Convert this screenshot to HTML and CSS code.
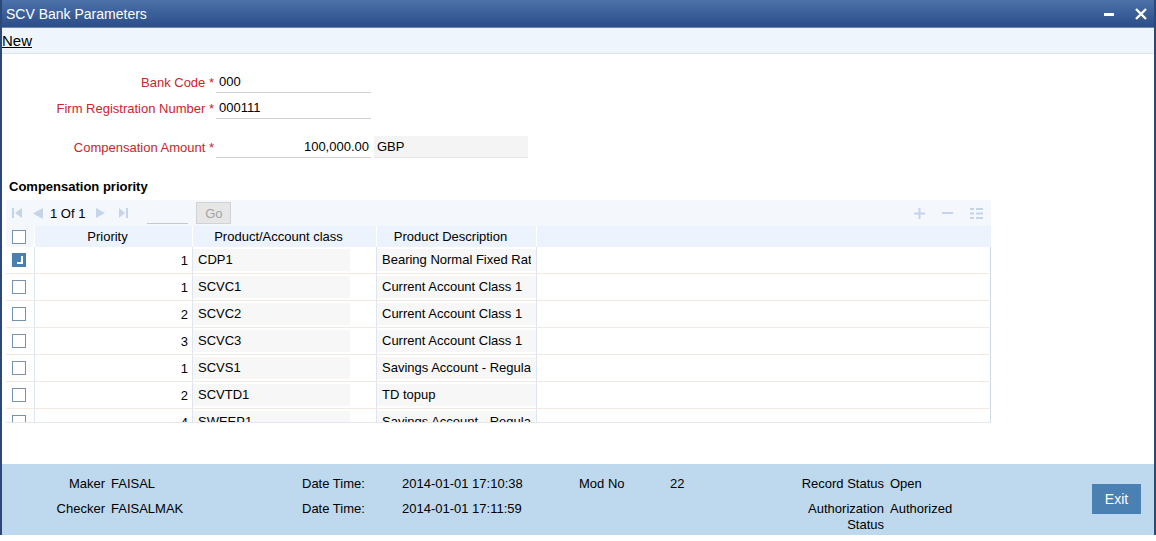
FILE: index.html
```html
<!DOCTYPE html>
<html lang="en">
<head>
    <meta charset="UTF-8">
    <title>SCV Bank Parameters</title>
    <link rel="stylesheet" href="styles.css">
</head>
<body>
    <div class="window">
        <div class="titlebar">
            <span class="title">SCV Bank Parameters</span>
            <svg class="btn-min" width="10" height="3" viewBox="0 0 10 3"><rect width="10" height="3" fill="#fff"/></svg>
            <svg class="btn-close" width="12" height="12" viewBox="0 0 12 12"><path d="M1 1L11 11M11 1L1 11" stroke="#fff" stroke-width="2.4"/></svg>
        </div>

        <div class="toolbar">
            <a href="#" class="new">New</a>
        </div>

        <div class="form">
            <div class="field">
                <label class="lbl">Bank Code <span class="req">*</span></label>
                <div class="inp">000</div>
            </div>
            <div class="field">
                <label class="lbl">Firm Registration Number <span class="req">*</span></label>
                <div class="inp">000111</div>
            </div>
            <div class="field field-gap">
                <label class="lbl">Compensation Amount <span class="req">*</span></label>
                <div class="inp num">100,000.00</div>
                <div class="ccy">GBP</div>
            </div>
        </div>

        <h3 class="section">Compensation priority</h3>

        <div class="grid">
            <div class="gtool">
                <svg class="nav nav-first" width="10" height="10" viewBox="0 0 10 10"><rect width="2" height="10"/><path d="M10 0L3 5L10 10Z"/></svg>
                <svg class="nav nav-prev" width="10" height="11" viewBox="0 0 10 11"><path d="M10 0L0 5.5L10 11Z"/></svg>
                <span class="pages">1 Of 1</span>
                <svg class="nav nav-next" width="9" height="10" viewBox="0 0 9 10"><path d="M0 0L9 5L0 10Z"/></svg>
                <svg class="nav nav-last" width="9" height="10" viewBox="0 0 9 10"><path d="M0 0L6 5L0 10Z"/><rect x="7" width="2" height="10"/></svg>
                <span class="pageinp"></span>
                <button class="go">Go</button>
                <svg class="tool tool-add" width="11" height="11" viewBox="0 0 11 11"><rect x="4.5" width="2" height="11"/><rect y="4.5" width="11" height="2"/></svg>
                <svg class="tool tool-del" width="11" height="2" viewBox="0 0 11 2"><rect width="11" height="2"/></svg>
                <svg class="tool tool-list" width="13" height="11" viewBox="0 0 13 11"><rect width="4" height="2"/><rect x="6" width="7" height="2"/><rect y="4.5" width="4" height="2"/><rect x="6" y="4.5" width="7" height="2"/><rect y="9" width="4" height="2"/><rect x="6" y="9" width="7" height="2"/></svg>
            </div>

            <div class="ghead">
                <div class="c-chk"><span class="chk"></span></div>
                <div class="c-pri">Priority</div>
                <div class="c-prod">Product/Account class</div>
                <div class="c-desc">Product Description</div>
                <div class="c-rest"></div>
            </div>

            <div class="gbody">
                <div class="grow">
                    <div class="c-chk"><svg class="chk-on" width="14" height="14" viewBox="0 0 14 14"><rect width="14" height="14" fill="#4b7fb0"/><path d="M9 3h2v8H5V9h4z" fill="#fff"/></svg></div>
                    <div class="c-pri">1</div>
                    <div class="c-prod"><span class="box">CDP1</span></div>
                    <div class="c-desc"><span class="box"><span class="txt">Bearing Normal Fixed Rate</span></span></div>
                    <div class="c-rest"></div>
                </div>
                <div class="grow">
                    <div class="c-chk"><span class="chk"></span></div>
                    <div class="c-pri">1</div>
                    <div class="c-prod"><span class="box">SCVC1</span></div>
                    <div class="c-desc"><span class="box"><span class="txt">Current Account Class 1</span></span></div>
                    <div class="c-rest"></div>
                </div>
                <div class="grow">
                    <div class="c-chk"><span class="chk"></span></div>
                    <div class="c-pri">2</div>
                    <div class="c-prod"><span class="box">SCVC2</span></div>
                    <div class="c-desc"><span class="box"><span class="txt">Current Account Class 1</span></span></div>
                    <div class="c-rest"></div>
                </div>
                <div class="grow">
                    <div class="c-chk"><span class="chk"></span></div>
                    <div class="c-pri">3</div>
                    <div class="c-prod"><span class="box">SCVC3</span></div>
                    <div class="c-desc"><span class="box"><span class="txt">Current Account Class 1</span></span></div>
                    <div class="c-rest"></div>
                </div>
                <div class="grow">
                    <div class="c-chk"><span class="chk"></span></div>
                    <div class="c-pri">1</div>
                    <div class="c-prod"><span class="box">SCVS1</span></div>
                    <div class="c-desc"><span class="box"><span class="txt">Savings Account - Regular</span></span></div>
                    <div class="c-rest"></div>
                </div>
                <div class="grow">
                    <div class="c-chk"><span class="chk"></span></div>
                    <div class="c-pri">2</div>
                    <div class="c-prod"><span class="box">SCVTD1</span></div>
                    <div class="c-desc"><span class="box"><span class="txt">TD topup</span></span></div>
                    <div class="c-rest"></div>
                </div>
                <div class="grow">
                    <div class="c-chk"><span class="chk"></span></div>
                    <div class="c-pri">4</div>
                    <div class="c-prod"><span class="box">SWEEP1</span></div>
                    <div class="c-desc"><span class="box"><span class="txt">Savings Account - Regular</span></span></div>
                    <div class="c-rest"></div>
                </div>
            </div>
        </div>

        <div class="footer">
            <div class="fcol fcol-1">
                <div class="frow"><span class="flbl">Maker</span><span class="fval">FAISAL</span></div>
                <div class="frow"><span class="flbl">Checker</span><span class="fval">FAISALMAK</span></div>
            </div>
            <div class="fcol fcol-2">
                <div class="frow"><span class="flbl">Date Time:</span><span>2014-01-01 17:10:38</span></div>
                <div class="frow"><span class="flbl">Date Time:</span><span>2014-01-01 17:11:59</span></div>
            </div>
            <div class="fcol fcol-3">
                <div class="frow"><span class="flbl">Mod No</span><span>22</span></div>
            </div>
            <div class="fcol fcol-4">
                <div class="frow"><span class="flbl">Record Status</span><span class="fval">Open</span></div>
                <div class="frow"><span class="flbl">Authorization Status</span><span class="fval">Authorized</span></div>
            </div>
            <button class="exit">Exit</button>
        </div>
    </div>
</body>
</html>
```

FILE: styles.css
```css
body {
    margin: 0;
    font-family: "Liberation Sans", Arial, sans-serif;
    font-size: 13px;
    color: #000;
    background: #fff;
}

.window {
    height: 535px;
    border-left: 2px solid #2c4877;
    border-right: 2px solid #2c4877;
    display: flex;
    flex-direction: column;
}

/* title bar */
.titlebar {
    height: 27px;
    border-bottom: 1px solid #6f88b0;
    background: linear-gradient(#4c72aa, #2b4d88);
    display: flex;
    align-items: center;
    color: #fff;
    font-size: 14px;
}

.title {
    flex: 1;
    padding-left: 4px;
}

.btn-min {
    margin-right: 21px;
    margin-top: 2px;
}

.btn-close {
    margin-right: 7px;
}

.toolbar {
    height: 25px;
    background: #eef5fd;
    border-bottom: 1px solid #dfe4ea;
    display: flex;
    align-items: center;
}

.new {
    font-size: 15px;
    color: #000;
    text-decoration: underline;
}

/* form fields */
.form {
    padding-top: 18px;
}

.field {
    display: flex;
    align-items: flex-end;
    margin-bottom: 5px;
}

.field-gap {
    margin-top: 17px;
}

.lbl {
    width: 212px;
    margin-right: 2px;
    text-align: right;
    color: #c9252c;
    line-height: 20px;
}

.req {
    color: #c9252c;
}

.inp {
    width: 155px;
    height: 21px;
    box-sizing: border-box;
    border-bottom: 1px solid #d0d0d0;
    padding-left: 3px;
    line-height: 20px;
}

.inp.num {
    text-align: right;
    padding-right: 2px;
}

.ccy {
    width: 154px;
    height: 22px;
    box-sizing: border-box;
    margin-left: 3px;
    padding-left: 3px;
    background: #f4f4f4;
    border-bottom: 1px solid #e6e6e6;
    line-height: 21px;
}

.section {
    margin: 16px 0 5px;
    padding-left: 7px;
    font-size: 13px;
    line-height: 16px;
}

/* grid */
.grid {
    margin-left: 4px;
    width: 985px;
}

.gtool {
    height: 26px;
    background: #f4f7fc;
    display: flex;
    align-items: center;
}

.nav, .tool {
    fill: #c5d4e9;
}

.nav-first { margin-left: 6px; }
.nav-prev { margin-left: 11px; }
.nav-next { margin-left: 11px; }
.nav-last { margin-left: 14px; }

.pages {
    margin-left: 7px;
}

.pageinp {
    align-self: flex-end;
    margin: 0 0 2px 19px;
    width: 41px;
    height: 20px;
    border-bottom: 1px solid #c9c9c9;
}

.go {
    margin-left: 8px;
    width: 35px;
    height: 22px;
    padding: 0;
    background: #e6e6e6;
    border: 1px solid #d2d2d2;
    color: #a3a3a3;
    font-family: inherit;
    font-size: 13px;
}

.tool-add { margin-left: auto; }
.tool-del { margin-left: 17px; }
.tool-list { margin-left: 17px; margin-right: 8px; }

.ghead, .grow {
    display: flex;
}

.ghead {
    height: 21px;
    line-height: 21px;
    background: #ecf3fd;
}

.ghead > div {
    box-sizing: border-box;
    border-right: 1px solid #fff;
    text-align: center;
    padding-right: 12px;
}

.ghead .c-chk {
    background: #f4f7fc;
    padding: 0 0 0 6px;
    display: flex;
    align-items: center;
}

.ghead .c-rest {
    border-right: none;
}

.c-chk { width: 29px; }
.c-pri { width: 158px; }
.c-prod { width: 184px; }
.c-desc { width: 160px; }
.c-rest { flex: 1; }

.chk {
    display: block;
    width: 14px;
    height: 14px;
    box-sizing: border-box;
    border: 1px solid #7891b0;
    background: #fff;
}

.gbody {
    height: 175px;
    overflow: hidden;
    border-bottom: 1px solid #e4e8ee;
}

.grow {
    height: 27px;
    box-sizing: border-box;
    border-bottom: 1px solid #f2e8e4;
}

.grow > div {
    box-sizing: border-box;
    border-right: 1px solid #dfe5ee;
    display: flex;
    align-items: center;
}

.grow .c-chk {
    padding-left: 6px;
}

.grow .c-pri {
    justify-content: flex-end;
    padding-right: 4px;
}

.grow .c-rest {
    border-right-color: #cfd8e6;
}

.box {
    display: block;
    height: 22px;
    line-height: 22px;
    background: #f7f7f7;
    padding-left: 5px;
    box-sizing: border-box;
}

.c-prod .box {
    width: 157px;
}

.c-desc .box {
    width: 159px;
}

.txt {
    display: block;
    width: 149px;
    overflow: hidden;
    white-space: nowrap;
}

/* footer */
.footer {
    margin-top: auto;
    height: 71px;
    box-sizing: border-box;
    padding-top: 12px;
    background: #bed9ee;
    display: flex;
    align-items: flex-start;
}

.fcol {
    display: flex;
    flex-direction: column;
    gap: 9px;
    line-height: 16px;
}

.frow {
    display: flex;
}

.fcol-1 { width: 300px; }
.fcol-1 .flbl { width: 103px; text-align: right; }

.fcol-2 { width: 277px; }
.fcol-2 .flbl { width: 100px; }

.fcol-3 { width: 200px; }
.fcol-3 .flbl { width: 91px; }

.fcol-4 .flbl { width: 105px; text-align: right; }

.fval {
    margin-left: 6px;
}

.exit {
    margin: 8px 13px 0 auto;
    width: 49px;
    height: 30px;
    padding: 0;
    border: none;
    background: #4a80b2;
    color: #fff;
    font-family: inherit;
    font-size: 14px;
}
```
